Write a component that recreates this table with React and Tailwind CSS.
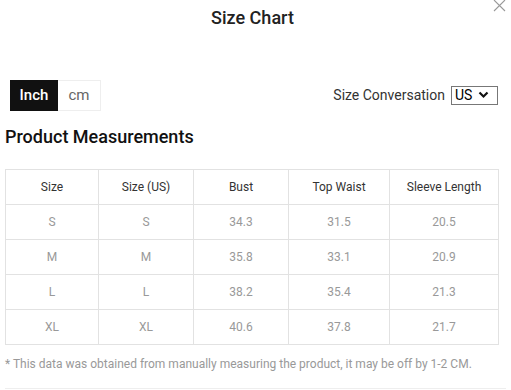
import { useState } from "react";

const rows = [
  ["S", "S", "34.3", "31.5", "20.5"],
  ["M", "M", "35.8", "33.1", "20.9"],
  ["L", "L", "38.2", "35.4", "21.3"],
  ["XL", "XL", "40.6", "37.8", "21.7"],
];

const heads = ["Size", "Size (US)", "Bust", "Top Waist", "Sleeve Length"];
const widths = ["w-[93px]", "w-[95px]", "w-[95px]", "w-[101px]", "w-[109px]"];

const App = () => {
  const [unit, setUnit] = useState("inch");

  return (
    <div className="relative w-[511px] h-[390px] overflow-hidden bg-white font-['Roboto',sans-serif]">
      <button className="absolute right-[5px] top-[-1px] text-[#999]">
        <svg width="13" height="13" viewBox="0 0 13 13" fill="none" stroke="currentColor" strokeWidth="1.1">
          <path d="M1 1L12 12M12 1L1 12" />
        </svg>
      </button>

      <div className="pt-[6px] h-[36px] pr-[6px] text-center">
        <h2 className="text-[18px] leading-[24px] font-medium text-[#222]">Size Chart</h2>
      </div>

      <div className="mt-[44px] px-[5px] flex items-center justify-between">
        <div className="flex ml-[5px] h-[31px]">
          <button
            onClick={() => setUnit("inch")}
            className={
              unit === "inch"
                ? "w-[48px] bg-[#111] text-white text-[15px] font-medium"
                : "w-[48px] border border-[#eee] text-[#666] text-[15px]"
            }
          >
            Inch
          </button>
          <button
            onClick={() => setUnit("cm")}
            className={
              unit === "cm"
                ? "w-[43px] bg-[#111] text-white text-[15px] font-medium"
                : "w-[43px] border border-[#eee] border-l-0 text-[#666] text-[15px]"
            }
          >
            cm
          </button>
        </div>
        <div className="flex items-center gap-[6px] mr-[8px] mt-[-1px]">
          <span className="text-[14px] text-[#333]">Size Conversation</span>
          <div className="flex items-center w-[47px] h-[19px] border border-[#777] pl-[3px] text-[14px] text-black">
            <span className="leading-none">US</span>
            <svg className="ml-[6px]" width="11" height="8" viewBox="0 0 11 8" fill="none" stroke="#111" strokeWidth="2.2">
              <path d="M1.5 1.5L5.5 5.5L9.5 1.5" />
            </svg>
          </div>
        </div>
      </div>

      <h3 className="mt-[14px] px-[5px] text-[18px] leading-[24px] font-medium text-[#111]">
        Product Measurements
      </h3>

      <div className="px-[5px] mt-[20px]">
        <table className="border-collapse text-[12px]">
          <thead>
            <tr className="h-[35px]">
              {heads.map((h, i) => (
                <th key={h} className={`${widths[i]} border border-[#e2e2e2] font-normal text-[#333]`}>
                  {h}
                </th>
              ))}
            </tr>
          </thead>
          <tbody>
            {rows.map((r) => (
              <tr key={r[0]} className="h-[35px]">
                {r.map((c, i) => (
                  <td key={i} className="border border-[#e2e2e2] text-center text-[#999]">
                    {c}
                  </td>
                ))}
              </tr>
            ))}
          </tbody>
        </table>
      </div>

      <p className="mt-[10px] px-[5px] text-[12px] text-[#999]">
        * This data was obtained from manually measuring the product, it may be off by 1-2 CM.
      </p>

      <div className="mx-[5px] mt-[15px] border-t border-[#eee]" />
    </div>
  );
};

export default App;
